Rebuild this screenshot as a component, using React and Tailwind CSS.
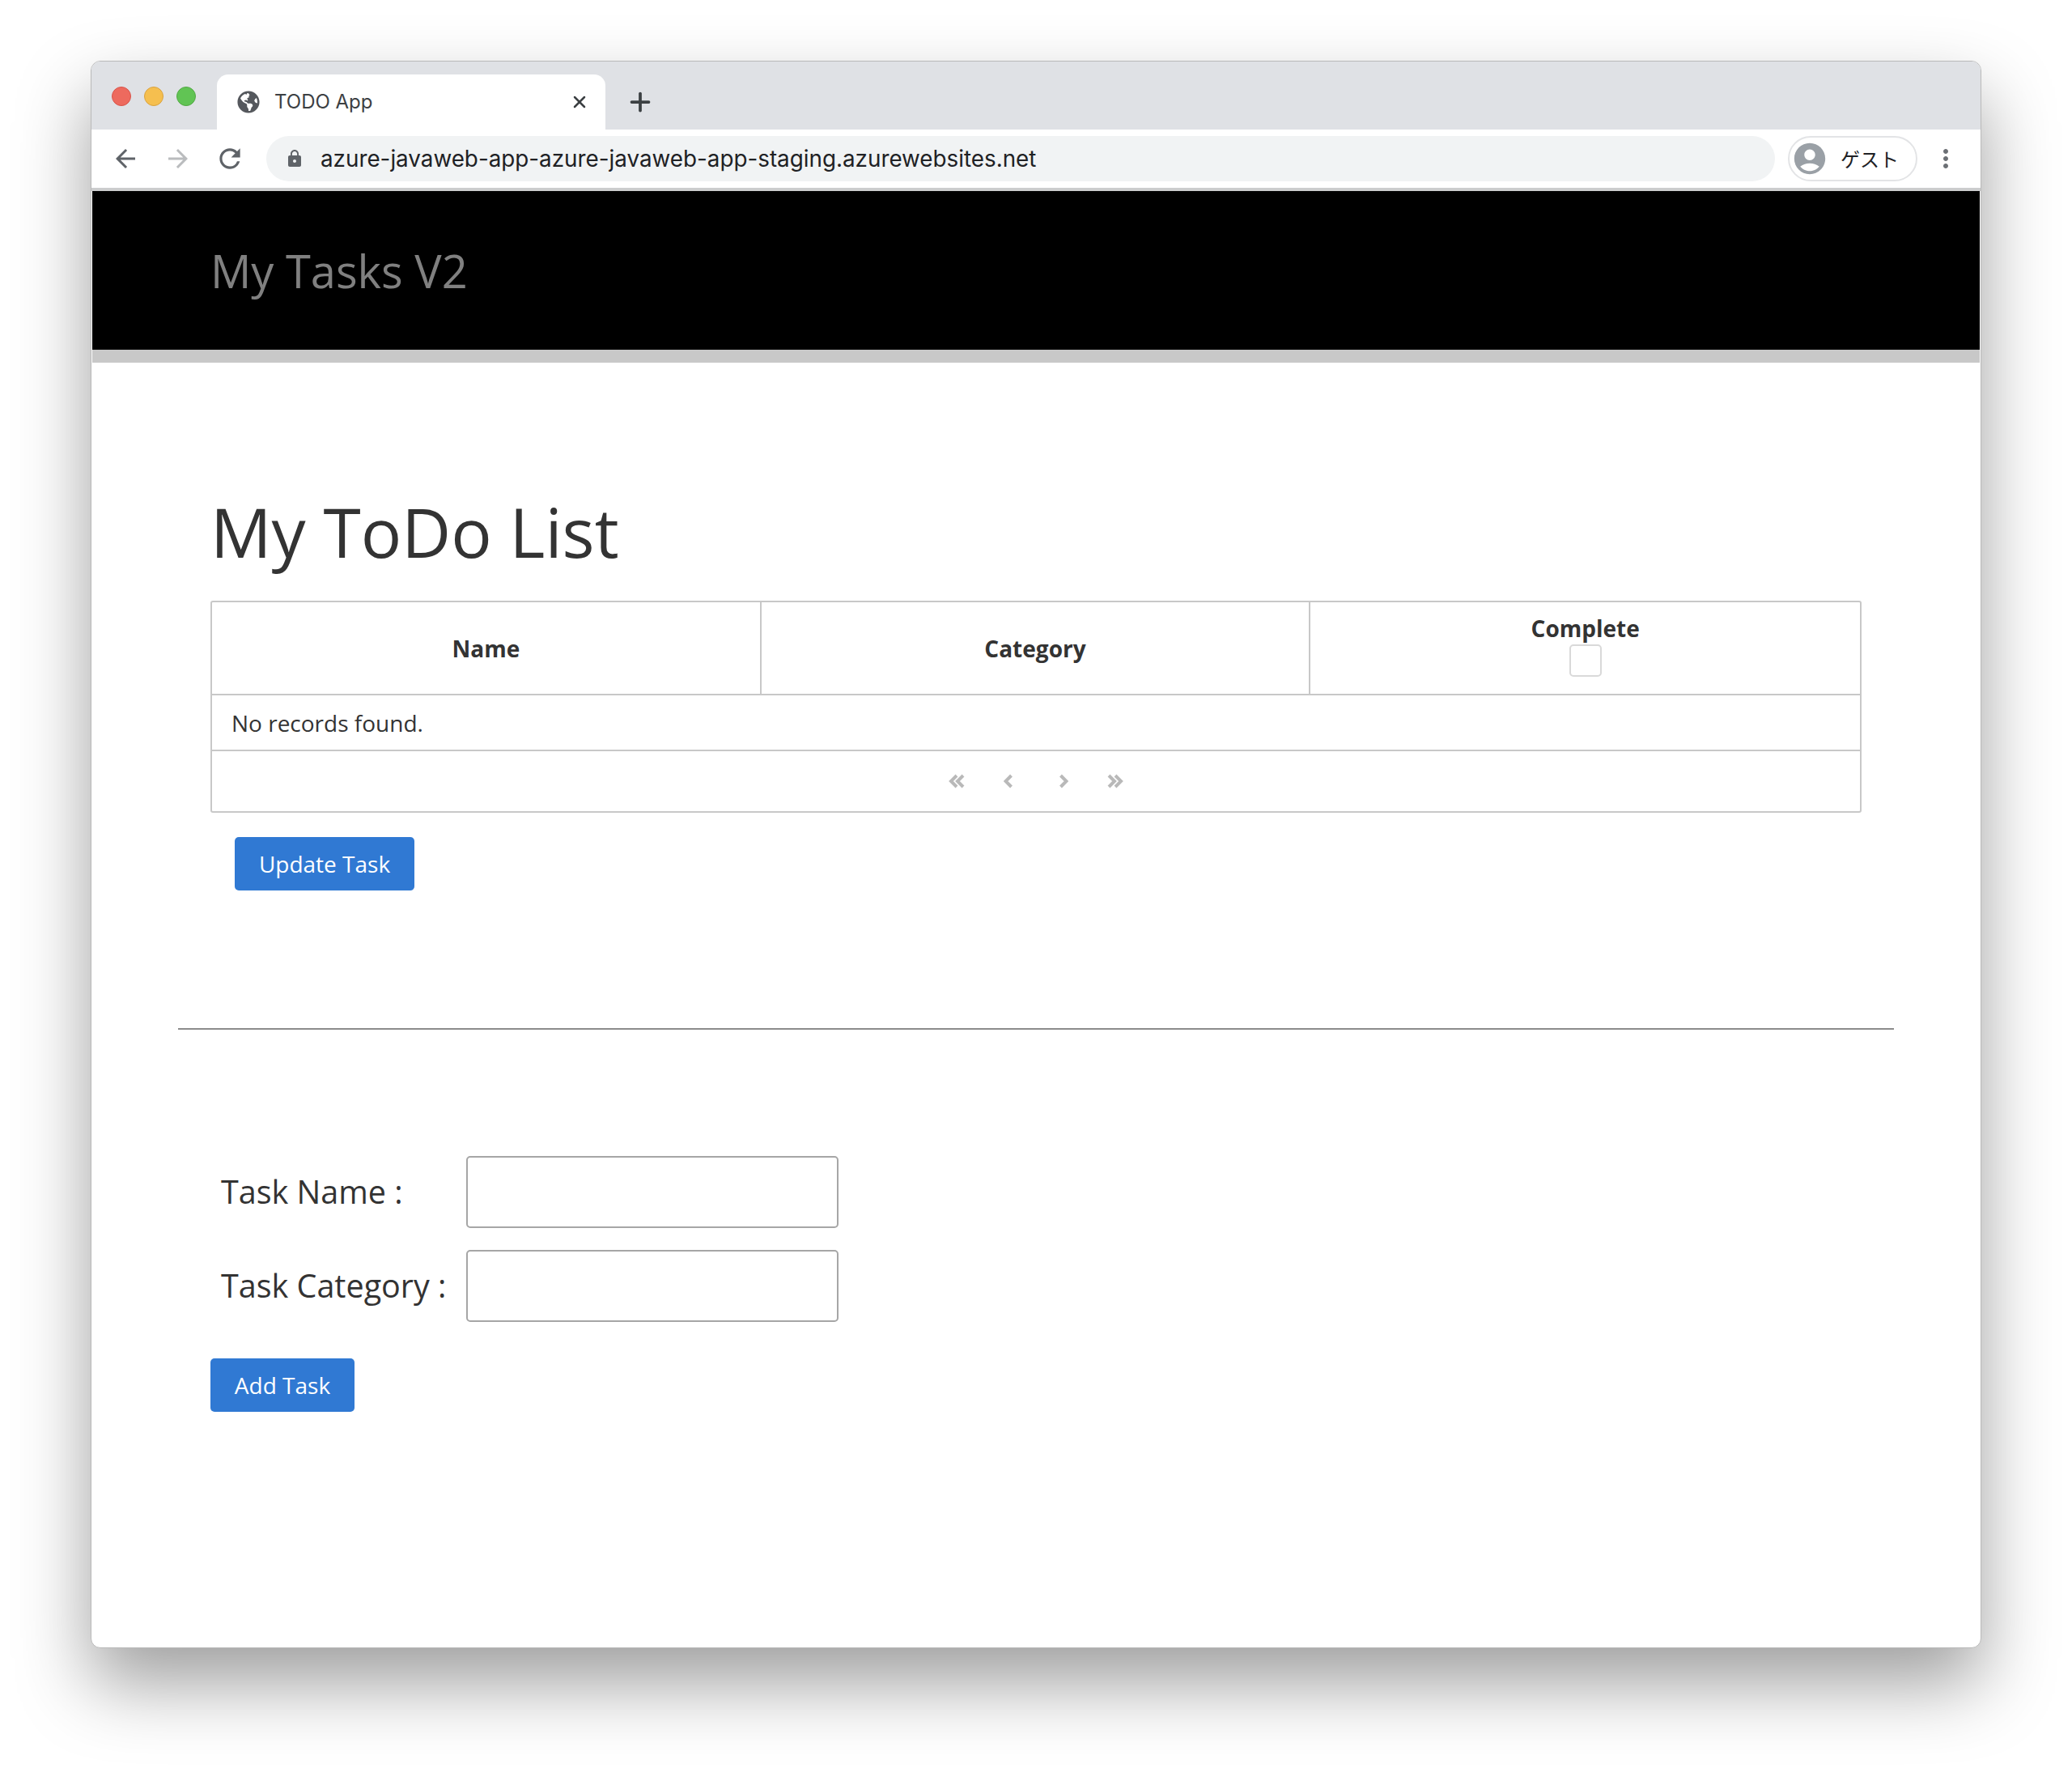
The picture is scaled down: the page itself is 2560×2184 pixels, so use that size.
import { Plus, X } from 'lucide-react'
import { FaGlobeAmericas } from 'react-icons/fa'
import { MdArrowBack, MdArrowForward, MdRefresh, MdLock, MdAccountCircle, MdMoreVert } from 'react-icons/md'

const pageFont = "font-['Open_Sans',sans-serif]"

function BrowserChrome() {
  return (
    <div>
      {/* Tab strip */}
      <div className="h-[84px] bg-[#dfe1e5] flex items-end">
        <div className="w-[155px] h-full flex items-center gap-4 pl-[25px] pt-[2px]">
          <span className="w-6 h-6 rounded-full bg-[#ed6a5e] border border-[#d9544a]" />
          <span className="w-6 h-6 rounded-full bg-[#f5bf4f] border border-[#d9a23f]" />
          <span className="w-6 h-6 rounded-full bg-[#61c454] border border-[#52a944]" />
        </div>
        <div className="w-[480px] h-[68px] bg-white rounded-t-[14px] flex items-center pl-[25px] pr-[20px]">
          <FaGlobeAmericas className="w-[28px] h-[28px] text-[#55585d]" />
          <span className="ml-[18px] flex-1 text-[24px] text-[#3c4043] font-['Inter',sans-serif]">TODO App</span>
          <X className="w-[24px] h-[24px] text-[#3c4043]" strokeWidth={2.5} />
        </div>
        <div className="h-[68px] flex items-center pl-[25px]">
          <Plus className="w-[36px] h-[36px] text-[#3c4043]" strokeWidth={2.5} />
        </div>
      </div>

      {/* Address bar */}
      <div className="h-[72px] box-content bg-white flex items-center pl-[24px] border-b-[4px] border-[#cccdce]">
        <MdArrowBack className="w-[36px] h-[36px] text-[#5f6368]" />
        <MdArrowForward className="ml-[29px] w-[36px] h-[36px] text-[#babcbe]" />
        <MdRefresh className="ml-[27px] w-[38px] h-[38px] text-[#5f6368]" />
        <div className="ml-[26px] w-[1864px] h-[56px] rounded-full bg-[#f1f3f4] flex items-center pl-[23px]">
          <MdLock className="w-[24px] h-[24px] text-[#5f6368]" />
          <span className="ml-[20px] mt-[2px] text-[27.8px] text-[#202124] font-['Inter',sans-serif]">
            azure-javaweb-app-azure-javaweb-app-staging.azurewebsites.net
          </span>
        </div>
        <div className="ml-[16px] w-[160px] h-[56px] rounded-full border-2 border-[#e3e4e6] flex items-center pl-[2px]">
          <MdAccountCircle className="w-[46px] h-[46px] text-[#9aa0a6]" />
          <span className="ml-[15px] text-[24px] text-[#202124] font-['Noto_Sans_CJK_JP',sans-serif]">ゲスト</span>
        </div>
        <MdMoreVert className="ml-[17px] w-[36px] h-[36px] text-[#6c7075]" />
      </div>
    </div>
  )
}

function PagerIcon({ width, d }) {
  return (
    <svg width={width} height="18" viewBox={`0 0 ${width} 18`} fill="none" stroke="#b9b9b9" strokeWidth="4">
      <path d={d} />
    </svg>
  )
}

function TodoTable() {
  return (
    <div className="mx-[147px] border-2 border-[#c8c8c8] rounded-[3px] text-[#333333]">
      <div className="grid grid-cols-3 h-[115px] border-b-2 border-[#c8c8c8] text-[28px] font-bold">
        <div className="flex items-center justify-center border-r-2 border-[#c8c8c8]">Name</div>
        <div className="flex items-center justify-center border-r-2 border-[#c8c8c8]">Category</div>
        <div className="flex flex-col items-center justify-center pb-[7px]">
          <span className="leading-[36px] mb-[2px]">Complete</span>
          <span className="w-[40px] h-[40px] rounded-[5px] border-2 border-[#d9d9d9] bg-white" />
        </div>
      </div>
      <div className="h-[69px] border-b-2 border-[#c8c8c8] flex items-center pl-[24px] text-[28px]">
        No records found.
      </div>
      <div className="h-[74px] flex items-center justify-center gap-[48px]">
        <PagerIcon width={20} d="M10 2 3 9l7 7M18 2l-7 7 7 7" />
        <PagerIcon width={11} d="M9.5 2 2.5 9l7 7" />
        <span className="ml-[10px] flex">
          <PagerIcon width={11} d="M1.5 2l7 7-7 7" />
        </span>
        <PagerIcon width={20} d="M2 2l7 7-7 7M10 2l7 7-7 7" />
      </div>
    </div>
  )
}

function FormRow({ label }) {
  return (
    <div className="flex items-center">
      <label className="w-[316px] pl-[13px] text-[39.5px] text-[#333333]">{label}</label>
      <input className="w-[460px] h-[89px] border-2 border-[#a6a6a6] rounded-[5px] bg-white" />
    </div>
  )
}

export default function App() {
  return (
    <div className={`w-[2560px] h-[2184px] bg-white pt-[75px] pl-[112px] ${pageFont}`}>
      <div className="w-[2336px] h-[1961px] bg-white rounded-[12px] overflow-hidden border border-[#b9b9b9] shadow-[0_44px_90px_rgba(0,0,0,0.38)]">
        <BrowserChrome />

        <div className="h-[212px] bg-black border-b-[16px] border-[#c8c8c8] pl-[146px] pt-[60px] mx-[1px]">
          <h2 className="text-[56px] leading-[76px] text-[#808080]">My Tasks V2</h2>
        </div>

        <h1 className="mt-[152px] ml-[147px] text-[84px] leading-[114px] text-[#333333]">My ToDo List</h1>
        <div className="mt-[28px]">
          <TodoTable />
        </div>

        <button className="ml-[177px] mt-[30px] w-[222px] h-[66px] bg-[#3079d3] rounded-[5px] text-white text-[28px]">
          Update Task
        </button>

        <div className="mt-[170px] mx-[107px] border-t-2 border-[#8c8c8c]" />

        <div className="mt-[156px] ml-[147px] flex flex-col gap-[27px]">
          <FormRow label="Task Name :" />
          <FormRow label="Task Category :" />
        </div>

        <button className="ml-[147px] mt-[45px] w-[178px] h-[66px] bg-[#3079d3] rounded-[5px] text-white text-[28px]">
          Add Task
        </button>
      </div>
    </div>
  )
}
